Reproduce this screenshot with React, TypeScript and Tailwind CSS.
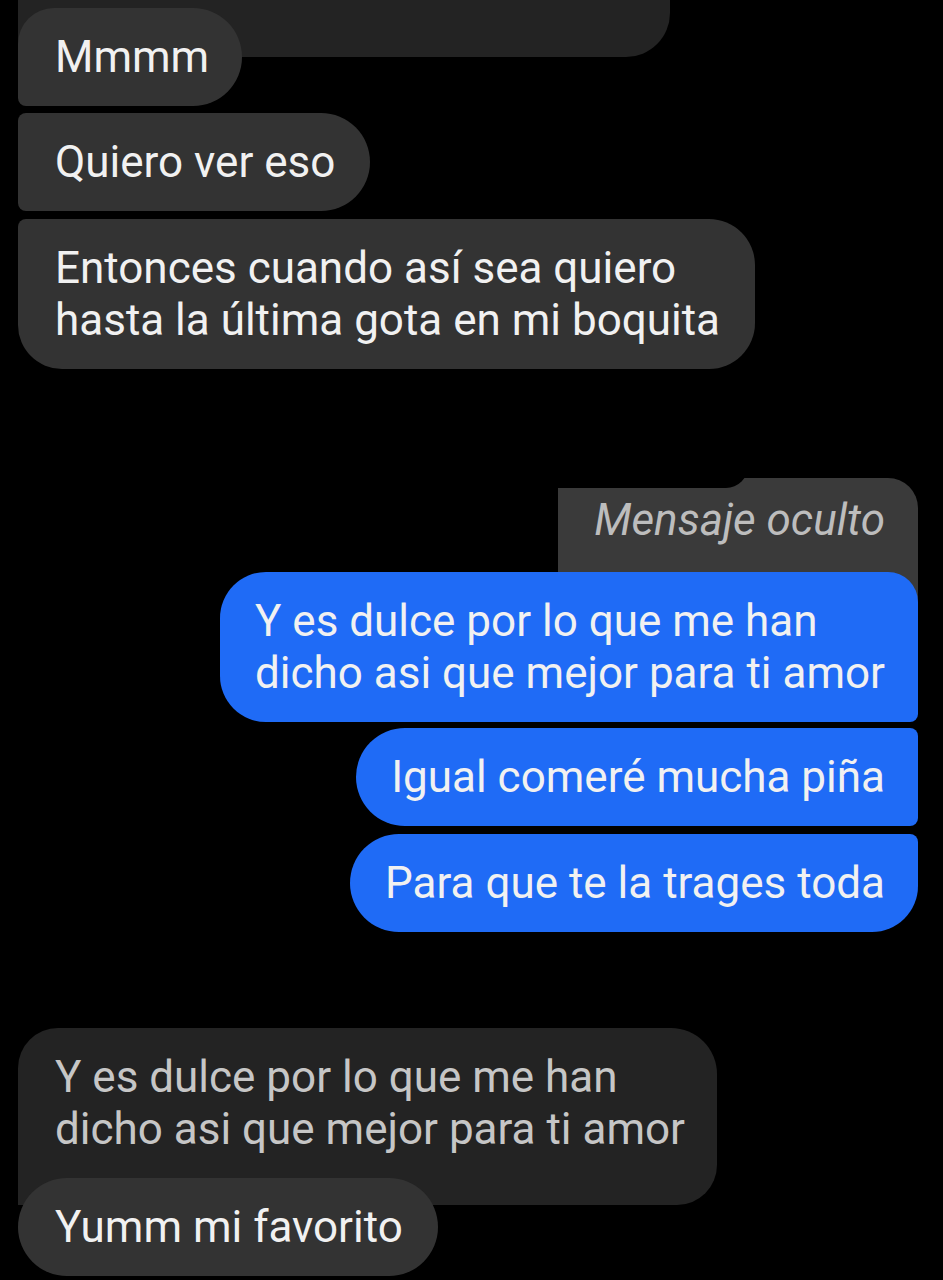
import React from "react";

const txt = "text-[44px] leading-[52px] tracking-[0px]";

export default function App() {
  return (
    <div className="w-[943px] h-[1280px] overflow-hidden bg-black font-['Roboto','Liberation_Sans',sans-serif] text-[#f1f1f1]">
      <div className="flex flex-col items-start">
        {/* quoted bubble cut off at the top */}
        <div className="ml-[18px] h-[57px] w-[652px] rounded-br-[44px] bg-[#232323]" />

        <div className={`relative ml-[18px] -mt-[49px] rounded-tl-[36px] rounded-bl-[8px] rounded-r-[49px] bg-[#333333] py-[23px] pl-[37px] pr-[33px] ${txt}`}>
          Mmmm
        </div>
        <div className={`ml-[18px] mt-[7px] rounded-l-[8px] rounded-r-[49px] bg-[#333333] py-[23px] pl-[37px] pr-[35px] ${txt}`}>
          Quiero ver eso
        </div>
        <div className={`ml-[18px] mt-[8px] rounded-tl-[8px] rounded-bl-[44px] rounded-r-[46px] bg-[#333333] py-[23px] pl-[37px] pr-[35px] ${txt}`}>
          Entonces cuando así sea quiero
          <br />
          hasta la última gota en mi boquita
        </div>

        {/* reply group, sent */}
        <div className="mt-[109px] mr-[25px] flex flex-col items-end self-end">
          <div className="relative w-[360px] rounded-tl-[10px] rounded-tr-[30px] bg-[#3a3a3a] pt-[16px] pb-[56px] pr-[33px] text-right text-[44px] italic leading-[52px] text-[#bdbdbd]">
            Mensaje oculto
            <div className="absolute -top-[12px] left-0 h-[22px] w-[190px] rounded-br-[40px] bg-black" />
          </div>
          <div className={`relative -mt-[30px] rounded-l-[46px] rounded-tr-[30px] rounded-br-[8px] bg-[#1f6bf6] py-[23px] pl-[35px] pr-[33px] ${txt}`}>
            Y es dulce por lo que me han
            <br />
            dicho asi que mejor para ti amor
          </div>
          <div className={`mt-[6px] rounded-l-[49px] rounded-r-[8px] bg-[#1f6bf6] py-[23px] pl-[35px] pr-[33px] ${txt}`}>
            Igual comeré mucha piña
          </div>
          <div className={`mt-[8px] rounded-l-[49px] rounded-tr-[8px] rounded-br-[46px] bg-[#1f6bf6] py-[23px] pl-[35px] pr-[33px] ${txt}`}>
            Para que te la trages toda
          </div>
        </div>

        {/* reply group, received */}
        <div className="mt-[96px] ml-[18px] flex flex-col items-start">
          <div className={`rounded-tl-[40px] rounded-tr-[46px] rounded-br-[40px] bg-[#232323] pt-[23px] pb-[50px] pl-[37px] pr-[32px] text-[#c6c6c6] ${txt}`}>
            Y es dulce por lo que me han
            <br />
            dicho asi que mejor para ti amor
          </div>
          <div className={`relative -mt-[27px] rounded-full bg-[#333333] py-[23px] pl-[37px] pr-[35px] ${txt}`}>
            Yumm mi favorito
          </div>
        </div>
      </div>
    </div>
  );
}
